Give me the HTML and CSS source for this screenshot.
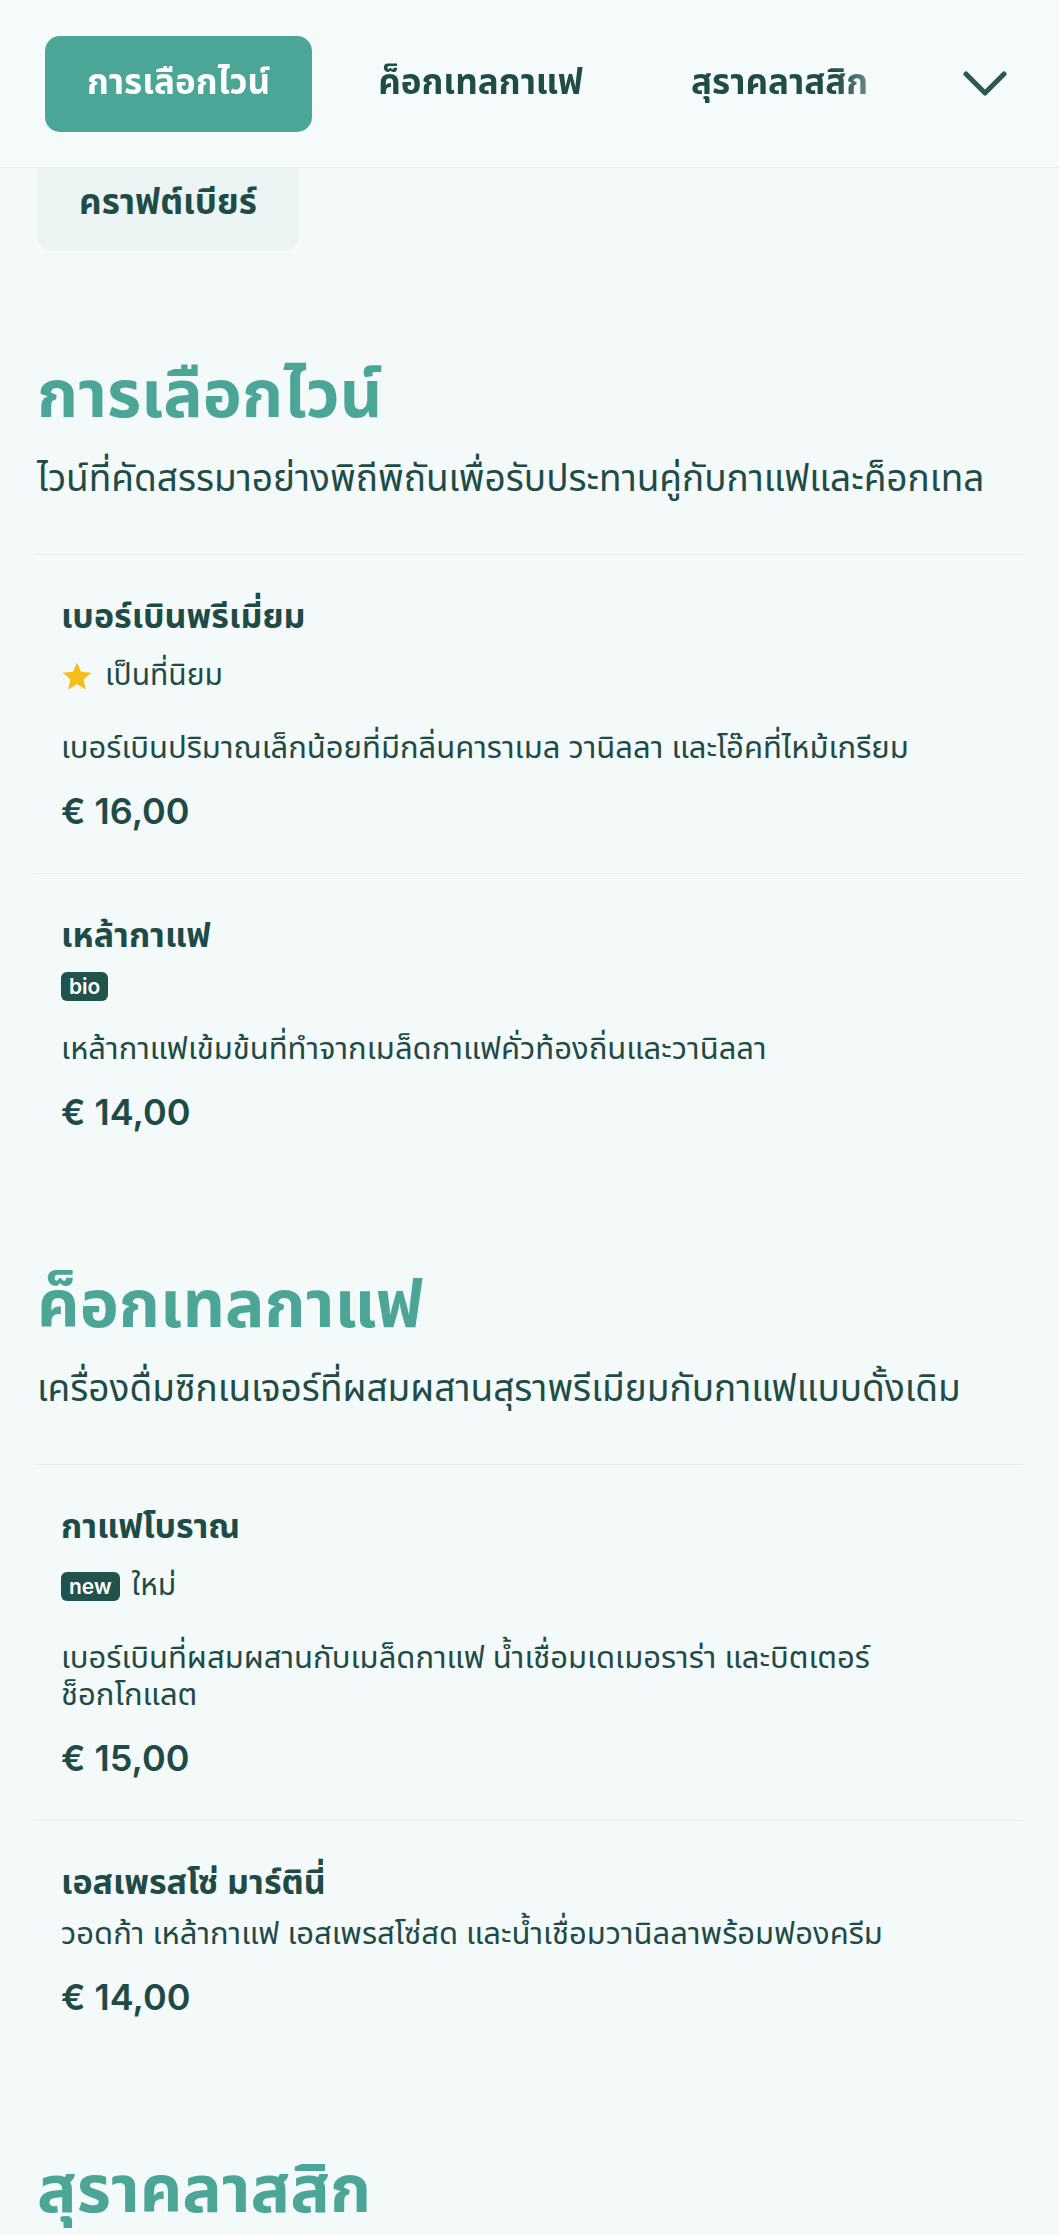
FILE: index.html
```html
<!DOCTYPE html>
<html lang="th">
<head>
<meta charset="utf-8">
<title>เมนู</title>
<link rel="stylesheet" href="styles.css">
</head>
<body>
<header class="topbar">
  <nav class="cats">
    <div class="cat-scroll">
      <a class="cat active">การเลือกไวน์</a>
      <a class="cat">ค็อกเทลกาแฟ</a>
      <a class="cat">สุราคลาสสิก</a>
    </div>
    <button class="more" aria-label="more">
      <svg viewBox="0 0 44 26" width="44" height="26"><path d="M3 3 L22 22 L41 3" fill="none" stroke="#2c5a53" stroke-width="5" stroke-linecap="round" stroke-linejoin="round"/></svg>
    </button>
  </nav>
</header>
<div class="cat-peek"><span>คราฟต์เบียร์</span></div>

<main class="menu">
  <section class="group first">
    <h2 class="group-title">การเลือกไวน์</h2>
    <p class="lead">ไวน์ที่คัดสรรมาอย่างพิถีพิถันเพื่อรับประทานคู่กับกาแฟและค็อกเทล</p>
    <ul class="items">
      <li class="item">
        <h3 class="name">เบอร์เบินพรีเมี่ยม</h3>
        <div class="tags tall">
          <svg class="star" viewBox="0 0 24 24" width="32" height="32"><path d="M12 1.8l3.05 7.05 7.65.7-5.8 5.05 1.75 7.5L12 18.1l-6.65 4 1.75-7.5L1.3 9.55l7.65-.7z" fill="#f5bd1e"/></svg>
          <span class="tag-label">เป็นที่นิยม</span>
        </div>
        <p class="desc">เบอร์เบินปริมาณเล็กน้อยที่มีกลิ่นคาราเมล วานิลลา และโอ๊คที่ไหม้เกรียม</p>
        <p class="price">€ 16,00</p>
      </li>
      <li class="item">
        <h3 class="name">เหล้ากาแฟ</h3>
        <div class="tags">
          <span class="badge">bio</span>
        </div>
        <p class="desc">เหล้ากาแฟเข้มข้นที่ทำจากเมล็ดกาแฟคั่วท้องถิ่นและวานิลลา</p>
        <p class="price">€ 14,00</p>
      </li>
    </ul>
  </section>

  <section class="group">
    <h2 class="group-title">ค็อกเทลกาแฟ</h2>
    <p class="lead">เครื่องดื่มซิกเนเจอร์ที่ผสมผสานสุราพรีเมียมกับกาแฟแบบดั้งเดิม</p>
    <ul class="items">
      <li class="item">
        <h3 class="name">กาแฟโบราณ</h3>
        <div class="tags tall">
          <span class="badge">new</span>
          <span class="tag-label">ใหม่</span>
        </div>
        <p class="desc">เบอร์เบินที่ผสมผสานกับเมล็ดกาแฟ น้ำเชื่อมเดเมอราร่า และบิตเตอร์ช็อกโกแลต</p>
        <p class="price">€ 15,00</p>
      </li>
      <li class="item">
        <h3 class="name">เอสเพรสโซ่ มาร์ตินี่</h3>
        <p class="desc">วอดก้า เหล้ากาแฟ เอสเพรสโซ่สด และน้ำเชื่อมวานิลลาพร้อมฟองครีม</p>
        <p class="price">€ 14,00</p>
      </li>
    </ul>
  </section>

  <section class="group">
    <h2 class="group-title">สุราคลาสสิก</h2>
  </section>
</main>
</body>
</html>
```
FILE: styles.css
```css
* { box-sizing: border-box; }

html, body {
  margin: 0;
  padding: 0;
  background: #f4f9fa;
}

body {
  font-family: "Noto Sans Thai", "Noto Sans", "Liberation Sans", sans-serif;
  color: #1e4b45;
  overflow: hidden;
}

/* ---------- top category bar ---------- */
.topbar {
  height: 168px;
  border-bottom: 1px solid #e4edef;
  background: #f5fafb;
  padding: 0 36px 0 45px;
}

.cats {
  height: 100%;
  display: flex;
  align-items: center;
}

.cat-scroll {
  flex: 0 0 885px;
  display: flex;
  align-items: center;
  gap: 24px;
  overflow: hidden;
  -webkit-mask-image: linear-gradient(to right, #000 790px, rgba(0,0,0,0) 885px);
  mask-image: linear-gradient(to right, #000 790px, rgba(0,0,0,0) 885px);
}

.cat {
  flex: 0 0 auto;
  height: 96px;
  display: flex;
  align-items: center;
  padding: 0 42px;
  border-radius: 15px;
  font-size: 35px;
  font-weight: 700;
  color: #1f4c46;
  white-space: nowrap;
}

.cat.active {
  background: #4ba697;
  color: #ffffff;
}

.more {
  margin-left: auto;
  width: 76px;
  height: 76px;
  border: 0;
  background: transparent;
  padding: 0;
  display: flex;
  align-items: center;
  justify-content: center;
}

.cat-peek {
  margin-left: 37px;
  width: 262px;
  height: 83px;
  background: #ecf4f4;
  border-radius: 0 0 15px 15px;
  text-align: center;
  font-size: 35px;
  font-weight: 700;
  line-height: 72px;
  color: #1f4c46;
}

/* ---------- menu ---------- */
.menu {
  padding: 0 36px 0 37px;
}

.group { margin-top: 97px; }
.group.first { margin-top: 110px; }

.group-title {
  margin: 0;
  font-size: 66px;
  line-height: 72px;
  font-weight: 700;
  color: #4ba697;
}

.lead {
  margin: 23px 0 50px;
  font-size: 37px;
  line-height: 48px;
  color: #1f4c46;
}

.items {
  list-style: none;
  margin: 0;
  padding: 0;
}

.item {
  border-top: 1px solid #e6eff0;
  padding: 43px 24px 40px;
}

.name {
  margin: 0 0 12px;
  font-size: 34px;
  line-height: 40px;
  font-weight: 700;
  color: #1e4b45;
}

.tags {
  display: flex;
  align-items: center;
  gap: 12px;
  margin: 14px 0 30px;
  min-height: 30px;
}

.tags.tall { min-height: 48px; }

.star { flex: 0 0 auto; display: block; }

.tag-label {
  font-size: 30px;
  line-height: normal;
  color: #1e4b45;
}

.badge {
  display: inline-flex;
  align-items: center;
  height: 29px;
  padding: 0 8px;
  border-radius: 6px;
  background: #22524c;
  color: #ffffff;
  font-family: "Inter", "Liberation Sans", sans-serif;
  font-size: 21px;
  line-height: 29px;
  font-weight: 600;
}

.desc {
  margin: 0;
  font-size: 31px;
  line-height: 37px;
  color: #1e4b45;
}

.price {
  margin: 22px 0 0;
  font-family: "Inter", "Liberation Sans", sans-serif;
  font-size: 36px;
  line-height: 44px;
  font-weight: 600;
  color: #1e4b45;
}
```
